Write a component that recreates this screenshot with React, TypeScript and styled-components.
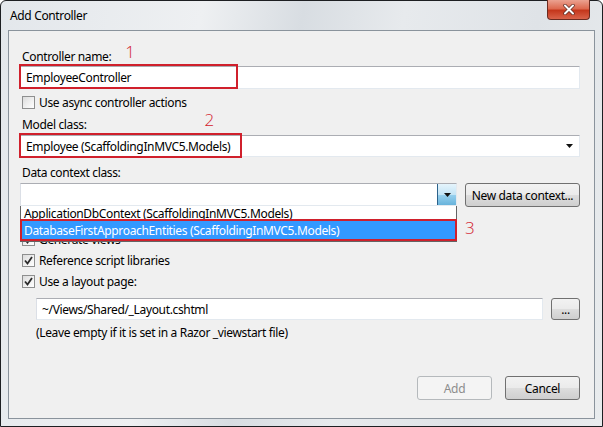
import React from 'react';
import styled, { createGlobalStyle } from 'styled-components';

const GlobalStyle = createGlobalStyle`
  html, body {
    margin: 0;
    padding: 0;
    background: #ffffff;
  }
  body {
    font-family: "Noto Sans", "Open Sans", "DejaVu Sans", sans-serif;
    font-size: 12px;
    letter-spacing: -0.35px;
    color: #000;
  }
`;

const Window = styled.div`
  width: 603px;
  height: 427px;
  box-sizing: border-box;
  border: 1px solid #1d1f22;
  border-radius: 6px 6px 0 0;
  background: linear-gradient(100deg, #e3e7eb 0%, #eef0f2 30%, #d8dde2 45%, #e7eaed 60%, #dfe3e7 80%, #e9ecee 100%);
  display: flex;
  flex-direction: column;
  position: relative;
`;

const TitleBar = styled.div`
  height: 29px;
  display: flex;
  align-items: center;
  padding-left: 9px;
  font-size: 12px;
  color: #000;
`;

const CloseButton = styled.div`
  position: absolute;
  top: -1px;
  right: 12px;
  width: 43px;
  height: 20px;
  box-sizing: border-box;
  border: 1px solid #6b2b20;
  border-top: none;
  border-radius: 0 0 4px 4px;
  background: linear-gradient(180deg, #eba290 0%, #dd6a50 45%, #c4371c 55%, #d9634a 100%);
  display: flex;
  align-items: center;
  justify-content: center;
`;

const Client = styled.div`
  flex: 1;
  margin: 0 7px 7px 7px;
  border: 1px solid #8a939c;
  background: #f0f0f0;
  display: flex;
  flex-direction: column;
  padding: 0 14px 0 11px;
  position: relative;
`;

const Label = styled.div<{ $top: number }>`
  margin-top: ${p => p.$top}px;
  height: 16px;
  line-height: 16px;
  padding-left: 2px;
  display: flex;
  align-items: center;
  white-space: nowrap;
`;

const Marker = styled.span<{ $gap: number }>`
  color: #d3202c;
  font-size: 17px;
  font-family: "Open Sans", "Noto Sans", sans-serif;
  font-weight: 300;
  margin-left: ${p => p.$gap}px;
  position: relative;
  top: -5px;
`;

const FieldWrap = styled.div<{ $top: number; $indent?: number }>`
  margin-top: ${p => p.$top}px;
  margin-left: ${p => p.$indent || 0}px;
  position: relative;
  display: flex;
  gap: 8px;
`;

const TextBox = styled.div<{ $h?: number }>`
  flex: 1;
  height: ${p => p.$h || 22}px;
  box-sizing: border-box;
  background: #fff;
  border: 1px solid #e3e9ef;
  border-top-color: #abadb3;
  border-left-color: #dbdfe6;
  display: flex;
  align-items: center;
  padding-left: 5px;
  white-space: nowrap;
  position: relative;
`;

const ArrowBox = styled.div<{ $pressed?: boolean }>`
  position: absolute;
  right: 0;
  top: 0;
  bottom: 0;
  width: 19px;
  display: flex;
  align-items: center;
  justify-content: center;
  box-sizing: border-box;
  border-left: ${p => (p.$pressed ? '1px solid #2c628b' : 'none')};
  background: ${p => (p.$pressed ? 'linear-gradient(180deg, #e5f4fc 0%, #c4e5f6 50%, #98d1ef 51%, #68b3db 100%)' : 'transparent')};
`;

const Highlight = styled.div<{ $w: number }>`
  position: absolute;
  left: -1px;
  top: -2px;
  width: ${p => p.$w}px;
  height: 25px;
  box-sizing: border-box;
  border: 2px solid #d0202c;
  pointer-events: none;
`;

const Button = styled.div<{ $w: number; $h?: number; $disabled?: boolean }>`
  width: ${p => p.$w}px;
  height: ${p => p.$h || 24}px;
  box-sizing: border-box;
  border: 1px solid ${p => (p.$disabled ? '#b5b9bc' : '#707070')};
  border-radius: 3px;
  background: ${p =>
    p.$disabled
      ? '#f4f4f4'
      : 'linear-gradient(180deg, #f2f2f2 0%, #ebebeb 48%, #dddddd 52%, #cfcfcf 100%)'};
  color: ${p => (p.$disabled ? '#8d8d8d' : '#000')};
  display: flex;
  align-items: center;
  justify-content: center;
  white-space: nowrap;
  flex-shrink: 0;
`;

const CheckRow = styled.div<{ $top: number }>`
  margin-top: ${p => p.$top}px;
  height: 16px;
  display: flex;
  align-items: center;
  gap: 4px;
  padding-left: 2px;
  white-space: nowrap;
`;

const Box = styled.div`
  width: 13px;
  height: 13px;
  box-sizing: border-box;
  border: 1px solid #8e8f8f;
  background: linear-gradient(135deg, #dcdcdc 0%, #f2f2f2 60%, #ffffff 100%);
  display: flex;
  align-items: center;
  justify-content: center;
`;

const Hint = styled.div`
  margin-top: 5px;
  margin-left: 16px;
  height: 16px;
  line-height: 16px;
  white-space: nowrap;
`;

const Footer = styled.div`
  margin-top: 35px;
  display: flex;
  justify-content: flex-end;
  gap: 13px;
`;

const DropList = styled.div`
  position: absolute;
  left: 0;
  top: 23px;
  width: 437px;
  box-sizing: border-box;
  border: 1px solid #646464;
  border-top: none;
  background: #fff;
  padding-bottom: 1px;
  z-index: 2;
`;

const ListItem = styled.div<{ $selected?: boolean }>`
  height: ${p => (p.$selected ? 19 : 15)}px;
  line-height: ${p => (p.$selected ? 19 : 15)}px;
  padding-left: 3px;
  white-space: nowrap;
  background: ${p => (p.$selected ? '#3399ff' : '#fff')};
  color: ${p => (p.$selected ? '#fff' : '#000')};
`;

const ListHighlight = styled.div`
  position: absolute;
  left: -1px;
  top: 13px;
  right: -1px;
  height: 22px;
  box-sizing: border-box;
  border: 2px solid #d0202c;
`;

const ListMarker = styled.span`
  position: absolute;
  left: 445px;
  top: 33px;
  color: #d3202c;
  font-size: 17px;
  font-family: "Open Sans", "Noto Sans", sans-serif;
  font-weight: 300;
`;

const Check = () => (
  <svg width="9" height="9" viewBox="0 0 9 9">
    <path d="M1 4.5 L3.5 7.5 L8 1" fill="none" stroke="#2b2b2b" strokeWidth="1.8" />
  </svg>
);

const DownArrow = () => (
  <svg width="7" height="4" viewBox="0 0 7 4">
    <path d="M0 0 H7 L3.5 4 Z" fill="#111" />
  </svg>
);

const CheckBox = ({ checked, label, top }: { checked?: boolean; label: string; top: number }) => (
  <CheckRow $top={top}>
    <Box>{checked && <Check />}</Box>
    <span>{label}</span>
  </CheckRow>
);

export default function App() {
  return (
    <>
      <GlobalStyle />
      <Window>
        <TitleBar>Add Controller</TitleBar>
        <CloseButton>
          <svg width="12" height="11" viewBox="0 0 12 11">
            <path d="M2 1.5 L10 9.5 M10 1.5 L2 9.5" stroke="#5a2a22" strokeWidth="3.4" strokeLinecap="round" />
            <path d="M2 1.5 L10 9.5 M10 1.5 L2 9.5" stroke="#ffffff" strokeWidth="2" strokeLinecap="round" />
          </svg>
        </CloseButton>

        <Client>
          <Label $top={18}>
            Controller name:
            <Marker $gap={14}>1</Marker>
          </Label>
          <FieldWrap $top={1}>
            <TextBox $h={23}>EmployeeController</TextBox>
            <Highlight $w={219} />
          </FieldWrap>

          <CheckBox label="Use async controller actions" top={5} />

          <Label $top={7}>
            Model class:
            <Marker $gap={118}>2</Marker>
          </Label>
          <FieldWrap $top={2}>
            <TextBox $h={22}>
              Employee (ScaffoldingInMVC5.Models)
              <ArrowBox>
                <DownArrow />
              </ArrowBox>
            </TextBox>
            <Highlight $w={223} />
          </FieldWrap>

          <Label $top={8}>Data context class:</Label>
          <FieldWrap $top={2}>
            <TextBox $h={23}>
              <ArrowBox $pressed>
                <DownArrow />
              </ArrowBox>
            </TextBox>
            <Button $w={115}>New data context...</Button>
            <DropList>
              <ListItem>ApplicationDbContext (ScaffoldingInMVC5.Models)</ListItem>
              <ListItem $selected>DatabaseFirstApproachEntities (ScaffoldingInMVC5.Models)</ListItem>
              <ListHighlight />
            </DropList>
            <ListMarker>3</ListMarker>
          </FieldWrap>

          <CheckBox checked label="Generate views" top={24} />
          <CheckBox checked label="Reference script libraries" top={5} />
          <CheckBox checked label="Use a layout page:" top={5} />

          <FieldWrap $top={9} $indent={16}>
            <TextBox $h={22}>~/Views/Shared/_Layout.cshtml</TextBox>
            <Button $w={29} $h={22}>...</Button>
          </FieldWrap>
          <Hint>(Leave empty if it is set in a Razor _viewstart file)</Hint>

          <Footer>
            <Button $w={75} $disabled>Add</Button>
            <Button $w={75}>Cancel</Button>
          </Footer>
        </Client>
      </Window>
    </>
  );
}
